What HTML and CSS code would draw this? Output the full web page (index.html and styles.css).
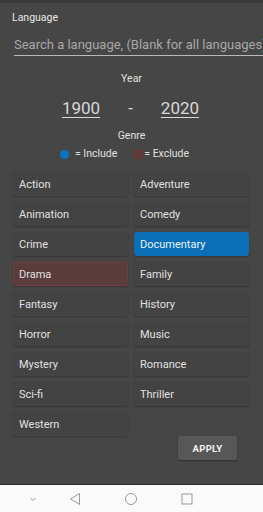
FILE: index.html
```html
<!DOCTYPE html>
<html lang="en">
<head>
  <meta charset="UTF-8" />
  <meta name="viewport" content="width=device-width, initial-scale=1.0" />
  <title>Filter</title>
  <link rel="stylesheet" href="styles.css">
</head>
<body>
  <div class="panel">
    <div class="label">Language</div>
    <div class="search">Search a language, (Blank for all languages)</div>

    <div class="section-title year-title">Year</div>
    <div class="years">
      <span class="year">1900</span>
      <span class="dash">-</span>
      <span class="year">2020</span>
    </div>

    <div class="section-title genre-title">Genre</div>
    <div class="legend">
      <span class="dot"></span><span>= Include</span>
      <span class="square"></span><span>= Exclude</span>
    </div>

    <div class="genres">
      <div class="genre">Action</div>
      <div class="genre">Adventure</div>
      <div class="genre">Animation</div>
      <div class="genre">Comedy</div>
      <div class="genre">Crime</div>
      <div class="genre include">Documentary</div>
      <div class="genre exclude">Drama</div>
      <div class="genre">Family</div>
      <div class="genre">Fantasy</div>
      <div class="genre">History</div>
      <div class="genre">Horror</div>
      <div class="genre">Music</div>
      <div class="genre">Mystery</div>
      <div class="genre">Romance</div>
      <div class="genre">Sci-fi</div>
      <div class="genre">Thriller</div>
      <div class="genre">Western</div>
    </div>

    <div class="actions">
      <button class="apply">APPLY</button>
    </div>
  </div>

  <!-- Android navigation bar -->
  <div class="navbar">
    <svg class="nav-icon chevron" width="10" height="10" viewBox="0 0 10 10">
      <path d="M2.5 4l2.5 2.5 2.5-2.5" />
    </svg>
    <svg class="nav-icon" width="14" height="14" viewBox="0 0 14 14">
      <path d="M11.5 1.5v11l-9-5.5z" />
    </svg>
    <svg class="nav-icon" width="14" height="14" viewBox="0 0 14 14">
      <circle cx="7" cy="7" r="5.5" />
    </svg>
    <svg class="nav-icon" width="14" height="14" viewBox="0 0 14 14">
      <rect x="2" y="2" width="10" height="10" />
    </svg>
  </div>
</body>
</html>
```

FILE: styles.css
```css
body {
  margin: 0;
  padding: 0;
  width: 263px;
  height: 512px;
  overflow: hidden;
  font-family: Roboto, "Liberation Sans", sans-serif;
  background: #464646;
  color: #e2e2e2;
}

.panel {
  height: 481px;
  border-top: 3px solid #3a3a3a;
  background: #464646;
  display: flex;
  flex-direction: column;
}

.label {
  margin: 9px 0 0 12px;
  font-size: 10.5px;
  line-height: 12px;
  color: #e6e6e6;
}

.search {
  margin: 12px 0 0 14px;
  padding-bottom: 2px;
  font-size: 13px;
  line-height: 17px;
  color: #a8a8a8;
  white-space: nowrap;
  overflow: hidden;
  border-bottom: 1px solid #b8b8b8;
}

.section-title {
  text-align: center;
  font-size: 10.5px;
  line-height: 12px;
  color: #e0e0e0;
}

.year-title {
  margin-top: 17px;
}

.years {
  margin: 13px 2px 0 0;
  display: flex;
  justify-content: center;
  align-items: center;
  gap: 27px;
  font-size: 17px;
  line-height: 21px;
  color: #d8d8d8;
}

.year {
  text-decoration: underline;
  text-underline-offset: 3px;
  text-decoration-thickness: 1px;
}

.dash {
  padding: 0 1px;
}

.genre-title {
  margin-top: 11px;
}

.legend {
  margin: 6px 14px 0 0;
  display: flex;
  justify-content: center;
  align-items: center;
  font-size: 10.5px;
  line-height: 12px;
  color: #e0e0e0;
}

.dot {
  width: 9px;
  height: 9px;
  border-radius: 50%;
  background: #0a74c2;
  margin-right: 6px;
}

.square {
  width: 9px;
  height: 9px;
  background: #603838;
  margin: 0 1px 0 17px;
}

.genres {
  margin: 12px 14px 0 13px;
  display: grid;
  grid-template-columns: 1fr 1fr;
  grid-auto-rows: 24px;
  gap: 6px;
}

.genre {
  display: flex;
  align-items: center;
  padding-left: 6px;
  font-size: 11px;
  color: #e0e0e0;
  background: #434343;
  border-radius: 2px;
  box-shadow: 0 1px 2px rgba(0, 0, 0, 0.25);
}

.include {
  background: #0a6fb6;
  border-radius: 3px;
  color: #e8f2fa;
}

.exclude {
  background: #5a3c3c;
  border: 1px solid #6e3d3d;
  padding-left: 5px;
}

.actions {
  margin-top: 0;
  padding-right: 26px;
  display: flex;
  justify-content: flex-end;
}

.apply {
  width: 59px;
  height: 24px;
  border: none;
  border-radius: 2px;
  background: #575757;
  color: #f2f2f2;
  font-family: Roboto, "Liberation Sans", sans-serif;
  font-size: 9.5px;
  font-weight: bold;
  letter-spacing: 0.3px;
  box-shadow: 0 1px 2px rgba(0, 0, 0, 0.35);
}

.navbar {
  height: 27px;
  border-top: 1px solid #2e2e2e;
  background: #fafafa;
  display: flex;
  align-items: center;
  padding-left: 28px;
  gap: 42px;
}

.nav-icon {
  fill: none;
  stroke: #9a9a9a;
  stroke-width: 1;
}

.chevron {
  margin-right: -12px;
}
```
